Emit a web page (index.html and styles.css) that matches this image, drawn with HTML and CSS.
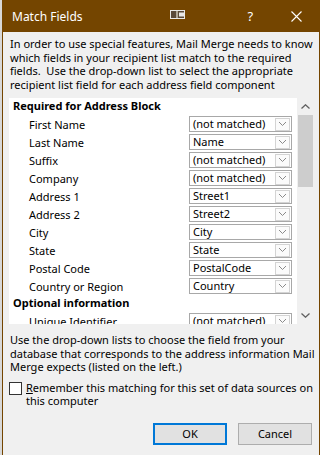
FILE: index.html
```html
<!DOCTYPE html>
<html lang="en">
<head>
    <meta charset="UTF-8">
    <meta name="viewport" content="width=device-width, initial-scale=1.0">
    <title>Match Fields</title>
    <link rel="stylesheet" href="styles.css">
</head>
<body>
<div class="dialog">
    <div class="titlebar">
        <span class="title">Match Fields</span>
        <svg class="tb-icon" width="16" height="10" viewBox="0 0 16 10">
            <rect x="0.5" y="0.5" width="14" height="8" fill="#5a4a3a" stroke="#e8e8e8" />
            <rect x="9" y="2.5" width="5" height="4" fill="#e8e8e8" />
            <rect x="6" y="1" width="2" height="7" fill="#b0a898" />
        </svg>
        <span class="tb-help">?</span>
        <svg class="tb-close" width="11" height="11" viewBox="0 0 11 11">
            <path d="M0.5 0.5 L10.5 10.5 M10.5 0.5 L0.5 10.5" stroke="#fff" stroke-width="1.1" />
        </svg>
    </div>
    <div class="body">
        <p class="intro">In order to use special features, Mail Merge needs to know which fields in your recipient list match to the required fields.&nbsp; Use the drop-down list to select the appropriate recipient list field for each address field component</p>

        <div class="listbox">
            <div class="list">
                <div class="group">Required for Address Block</div>
                <div class="row"><span class="label">First Name</span><div class="combo"><span class="combo-text">(not matched)</span><span class="combo-btn"><svg width="7" height="4" viewBox="0 0 7 4"><path d="M0 0 L3.5 3.5 L7 0" fill="none" stroke="#8a8a8a" /></svg></span></div></div>
                <div class="row"><span class="label">Last Name</span><div class="combo"><span class="combo-text">Name</span><span class="combo-btn"><svg width="7" height="4" viewBox="0 0 7 4"><path d="M0 0 L3.5 3.5 L7 0" fill="none" stroke="#8a8a8a" /></svg></span></div></div>
                <div class="row"><span class="label">Suffix</span><div class="combo"><span class="combo-text">(not matched)</span><span class="combo-btn"><svg width="7" height="4" viewBox="0 0 7 4"><path d="M0 0 L3.5 3.5 L7 0" fill="none" stroke="#8a8a8a" /></svg></span></div></div>
                <div class="row"><span class="label">Company</span><div class="combo"><span class="combo-text">(not matched)</span><span class="combo-btn"><svg width="7" height="4" viewBox="0 0 7 4"><path d="M0 0 L3.5 3.5 L7 0" fill="none" stroke="#8a8a8a" /></svg></span></div></div>
                <div class="row"><span class="label">Address 1</span><div class="combo"><span class="combo-text">Street1</span><span class="combo-btn"><svg width="7" height="4" viewBox="0 0 7 4"><path d="M0 0 L3.5 3.5 L7 0" fill="none" stroke="#8a8a8a" /></svg></span></div></div>
                <div class="row"><span class="label">Address 2</span><div class="combo"><span class="combo-text">Street2</span><span class="combo-btn"><svg width="7" height="4" viewBox="0 0 7 4"><path d="M0 0 L3.5 3.5 L7 0" fill="none" stroke="#8a8a8a" /></svg></span></div></div>
                <div class="row"><span class="label">City</span><div class="combo"><span class="combo-text">City</span><span class="combo-btn"><svg width="7" height="4" viewBox="0 0 7 4"><path d="M0 0 L3.5 3.5 L7 0" fill="none" stroke="#8a8a8a" /></svg></span></div></div>
                <div class="row"><span class="label">State</span><div class="combo"><span class="combo-text">State</span><span class="combo-btn"><svg width="7" height="4" viewBox="0 0 7 4"><path d="M0 0 L3.5 3.5 L7 0" fill="none" stroke="#8a8a8a" /></svg></span></div></div>
                <div class="row"><span class="label">Postal Code</span><div class="combo"><span class="combo-text">PostalCode</span><span class="combo-btn"><svg width="7" height="4" viewBox="0 0 7 4"><path d="M0 0 L3.5 3.5 L7 0" fill="none" stroke="#8a8a8a" /></svg></span></div></div>
                <div class="row"><span class="label">Country or Region</span><div class="combo"><span class="combo-text">Country</span><span class="combo-btn"><svg width="7" height="4" viewBox="0 0 7 4"><path d="M0 0 L3.5 3.5 L7 0" fill="none" stroke="#8a8a8a" /></svg></span></div></div>
                <div class="group">Optional information</div>
                <div class="row"><span class="label">Unique Identifier</span><div class="combo"><span class="combo-text">(not matched)</span><span class="combo-btn"><svg width="7" height="4" viewBox="0 0 7 4"><path d="M0 0 L3.5 3.5 L7 0" fill="none" stroke="#8a8a8a" /></svg></span></div></div>
            </div>
            <div class="scrollbar">
                <span class="sb-arrow"><svg width="9" height="5" viewBox="0 0 9 5"><path d="M0.5 4.5 L4.5 0.8 L8.5 4.5" fill="none" stroke="#606060" stroke-width="1.3" /></svg></span>
                <div class="sb-track"><div class="sb-thumb"></div></div>
                <span class="sb-arrow"><svg width="9" height="5" viewBox="0 0 9 5"><path d="M0.5 0.5 L4.5 4.2 L8.5 0.5" fill="none" stroke="#606060" stroke-width="1.3" /></svg></span>
            </div>
        </div>

        <p class="hint">Use the drop-down lists to choose the field from your database that corresponds to the address information Mail Merge expects (listed on the left.)</p>

        <label class="check">
            <span class="check-box"></span>
            <span class="check-text"><u>R</u>emember this matching for this set of data sources on this computer</span>
        </label>

        <div class="buttons">
            <button class="btn btn-default">OK</button>
            <button class="btn">Cancel</button>
        </div>
    </div>
</div>
</body>
</html>
```

FILE: styles.css
```css
html, body {
    margin: 0;
    padding: 0;
}
body {
    background-color: #d8d8d8;
    font-family: "Noto Sans", sans-serif;
    font-size: 11px;
    color: #000;
    height: 455px;
    overflow: hidden;
}
.dialog {
    margin-left: 2px;
    width: 316px;
    height: 455px;
    border-left: 1px solid #744500;
    border-right: 1px solid #744500;
    background-color: #f0f0f0;
}
.titlebar {
    display: flex;
    align-items: center;
    height: 32px;
    background-color: #744500;
    color: #fff;
}
.title {
    font-size: 12px;
    margin-left: 9px;
}
.tb-icon {
    margin-left: 87px;
    margin-top: -3px;
}
.tb-help {
    font-size: 13px;
    margin-left: 62px;
}
.tb-close {
    margin-left: 38px;
}
.body {
    padding: 0 0 0 7px;
}
.intro {
    margin: 5px 0 0 0;
    width: 306px;
    line-height: 13.5px;
}
.listbox {
    display: flex;
    margin: 7px 0 0 -1px;
    height: 226px;
    width: 304px;
}
.list {
    width: 288px;
    height: 226px;
    overflow: hidden;
    background-color: #fff;
}
.group {
    height: 17px;
    line-height: 16px;
    padding-left: 4px;
    font-weight: bold;
}
.row {
    display: grid;
    grid-template-columns: 180px 103px;
    align-items: center;
    height: 18px;
}
.label {
    padding-left: 20px;
}
.combo {
    display: flex;
    align-items: center;
    justify-content: space-between;
    height: 14px;
    border: 1px solid #a8a8a8;
    background-color: #fff;
}
.combo-text {
    padding-left: 3px;
    line-height: 14px;
}
.combo-btn {
    display: flex;
    align-items: center;
    justify-content: center;
    width: 13px;
    height: 11px;
    margin-right: 1px;
    border: 1px solid #d4d4d4;
    background-color: #fbfbfb;
}
.scrollbar {
    display: flex;
    flex-direction: column;
    width: 16px;
    background-color: #f0f0f0;
}
.sb-arrow {
    display: flex;
    align-items: center;
    justify-content: center;
    height: 17px;
}
.sb-track {
    flex: 1;
}
.sb-thumb {
    margin-left: 1px;
    width: 15px;
    height: 72px;
    background-color: #cdcdcd;
}
.hint {
    margin: 9px 0 0 0;
    width: 306px;
    line-height: 13.5px;
}
.check {
    display: flex;
    align-items: flex-start;
    margin-top: 7px;
}
.check-box {
    flex: none;
    width: 11px;
    height: 11px;
    margin: 1px 4px 0 -1px;
    border: 1px solid #333;
    background-color: #fff;
}
.check-text {
    line-height: 13px;
    width: 290px;
}
.buttons {
    display: flex;
    justify-content: flex-end;
    gap: 11px;
    margin: 16px 7px 0 0;
}
.btn {
    width: 74px;
    height: 22px;
    font-family: "Noto Sans", sans-serif;
    font-size: 11px;
    color: #000;
    background-color: #e1e1e1;
    border: 1px solid #adadad;
    padding: 0;
}
.btn-default {
    border: 2px solid #0078d7;
}
```
